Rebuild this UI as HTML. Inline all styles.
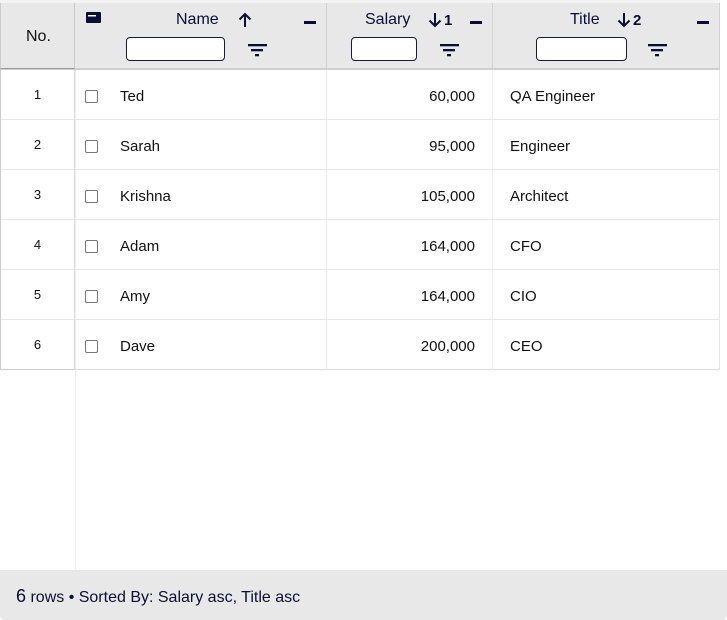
<!DOCTYPE html>
<html><head><meta charset="utf-8"><style>
*{margin:0;padding:0;box-sizing:border-box}
body{width:727px;height:620px;background:#fff;font-family:"Liberation Sans",Arial,sans-serif;color:#000;position:relative;overflow:hidden}
.a{position:absolute}
.hdr{left:0;top:0;width:720px;height:70px;background:#e8e8e8;border-top:3px solid #f3f3f3;border-bottom:2px solid #cfcfcf}
.vl{position:absolute;width:1px;background:#d0d0d0}
.row{position:absolute;left:0;width:720px;height:50px;border-bottom:1px solid #e6e6e6;font-size:15px;color:#111}
.num{position:absolute;left:0;width:75px;height:50px;line-height:50px;text-align:center;font-size:13px;border-left:1px solid #ccc;border-right:1px solid #e0e0e0}
.cb{position:absolute;left:85px;top:20px;width:13px;height:13px;border:1px solid #777;border-radius:2px;background:#fff}
.nm{position:absolute;left:120px;top:18px}
.sal{position:absolute;right:245px;top:18px}
.tt{position:absolute;left:510px;top:18px}
.inp{position:absolute;height:24px;background:#fff;border:1.5px solid #1a1a3a;border-radius:4px;top:37px}
.ht{position:absolute;top:11px;font-size:16px;color:#0d0d33}
.minus{position:absolute;top:21px;width:12px;height:2.5px;background:#0d0d33}
</style></head><body>
<div class="a hdr"></div>
<div class="a" style="left:0;top:3px;width:75px;height:66px;border-left:1px solid #ccc;border-right:1px solid #c8c8c8;border-bottom:1px solid #999"></div>
<div class="a" style="left:26px;top:28px;font-size:16px;color:#111">No.</div>
<div class="vl" style="left:326px;top:3px;height:66px"></div>
<div class="vl" style="left:492px;top:3px;height:66px"></div>
<div class="vl" style="left:719px;top:3px;height:66px"></div>
<svg class="a" style="left:86px;top:12px" width="15" height="12"><rect x="0" y="0" width="15" height="11" rx="1" fill="#0d0d33"/><rect x="2" y="3" width="8" height="1.5" fill="#fff"/></svg>
<div class="ht" style="left:176px">Name</div>
<svg class="a" style="left:238px;top:12px" width="14" height="16"><path d="M7 15V2M1.5 7.5L7 2l5.5 5.5" stroke="#0d0d33" stroke-width="2" fill="none"/></svg>
<div class="minus" style="left:304px"></div>
<div class="inp" style="left:126px;width:99px"></div>
<svg class="a" style="left:248px;top:44px" width="20" height="14"><rect x="0" y="0" width="19" height="2.3" fill="#0d0d33"/><rect x="3" y="5" width="12" height="2.3" fill="#0d0d33"/><rect x="7" y="10" width="4" height="2.3" fill="#0d0d33"/></svg>

<div class="ht" style="left:365px">Salary</div>
<svg class="a" style="left:428px;top:12px" width="14" height="16"><path d="M7 1v13M1.5 8.5L7 14l5.5-5.5" stroke="#0d0d33" stroke-width="2" fill="none"/></svg>
<div class="a" style="left:444px;top:12px;font-size:15px;font-weight:bold;color:#0d0d33">1</div>
<div class="minus" style="left:470px"></div>
<div class="inp" style="left:351px;width:66px"></div>
<svg class="a" style="left:440px;top:44px" width="20" height="14"><rect x="0" y="0" width="19" height="2.3" fill="#0d0d33"/><rect x="3" y="5" width="12" height="2.3" fill="#0d0d33"/><rect x="7" y="10" width="4" height="2.3" fill="#0d0d33"/></svg>

<div class="ht" style="left:570px">Title</div>
<svg class="a" style="left:617px;top:12px" width="14" height="16"><path d="M7 1v13M1.5 8.5L7 14l5.5-5.5" stroke="#0d0d33" stroke-width="2" fill="none"/></svg>
<div class="a" style="left:633px;top:12px;font-size:15px;font-weight:bold;color:#0d0d33">2</div>
<div class="minus" style="left:697px"></div>
<div class="inp" style="left:536px;width:91px"></div>
<svg class="a" style="left:648px;top:44px" width="20" height="14"><rect x="0" y="0" width="19" height="2.3" fill="#0d0d33"/><rect x="3" y="5" width="12" height="2.3" fill="#0d0d33"/><rect x="7" y="10" width="4" height="2.3" fill="#0d0d33"/></svg>

<div class="a" style="left:75px;top:70px;width:1px;height:500px;background:#ececec"></div>

<div class="row" style="top:70px"><div class="num">1</div><div class="cb"></div><div class="nm">Ted</div><div class="sal">60,000</div><div class="tt">QA Engineer</div></div>
<div class="row" style="top:120px"><div class="num">2</div><div class="cb"></div><div class="nm">Sarah</div><div class="sal">95,000</div><div class="tt">Engineer</div></div>
<div class="row" style="top:170px"><div class="num">3</div><div class="cb"></div><div class="nm">Krishna</div><div class="sal">105,000</div><div class="tt">Architect</div></div>
<div class="row" style="top:220px"><div class="num">4</div><div class="cb"></div><div class="nm">Adam</div><div class="sal">164,000</div><div class="tt">CFO</div></div>
<div class="row" style="top:270px"><div class="num">5</div><div class="cb"></div><div class="nm">Amy</div><div class="sal">164,000</div><div class="tt">CIO</div></div>
<div class="row" style="top:320px;border-bottom-color:#ddd"><div class="num" style="border-bottom:1px solid #ccc">6</div><div class="cb"></div><div class="nm">Dave</div><div class="sal">200,000</div><div class="tt">CEO</div></div>
<div class="vl" style="left:326px;top:70px;height:300px;background:#ececec"></div>
<div class="vl" style="left:492px;top:70px;height:300px;background:#ececec"></div>
<div class="vl" style="left:719px;top:70px;height:300px;background:#e6e6e6"></div>

<div class="a" style="left:0;top:570px;width:727px;height:50px;background:#e8e8e8;border-radius:0 0 4px 4px"></div>
<div class="a" style="left:16px;top:586px;font-size:16px;color:#0d0d33"><span style="font-size:18px">6</span> rows • Sorted By: Salary asc, Title asc</div>
</body></html>
